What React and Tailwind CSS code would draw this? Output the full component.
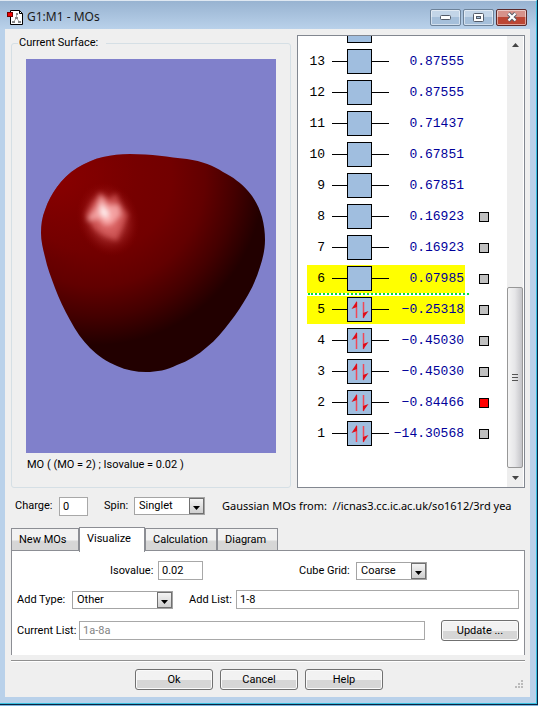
import { useState } from "react";

const orbitals = [
  { id: 13, energy: "0.87555" },
  { id: 12, energy: "0.87555" },
  { id: 11, energy: "0.71437" },
  { id: 10, energy: "0.67851" },
  { id: 9, energy: "0.67851" },
  { id: 8, energy: "0.16923", surface: true },
  { id: 7, energy: "0.16923", surface: true },
  { id: 6, energy: "0.07985", surface: true, selected: true },
  { id: 5, energy: "−0.25318", surface: true, occupied: true, selected: true },
  { id: 4, energy: "−0.45030", surface: true, occupied: true },
  { id: 3, energy: "−0.45030", surface: true, occupied: true },
  { id: 2, energy: "−0.84466", surface: true, occupied: true },
  { id: 1, energy: "−14.30568", surface: true, occupied: true },
];

const tabs = [
  { name: "New MOs", width: "w-[68px]" },
  { name: "Visualize", width: "w-[66px]" },
  { name: "Calculation", width: "w-[72px]" },
  { name: "Diagram", width: "w-[61px]" },
];

function AppIcon() {
  return (
    <svg width="16" height="17" viewBox="0 0 16 17" aria-hidden="true">
      <path d="M3.5 1.5h9l3 3v11h-12z" fill="#fff" stroke="#000" />
      <path d="M12.5 1.5v3h3" fill="none" stroke="#000" />
      <path d="M9.5 5v5M9.500 9l-3 4M9.500 9l3 4" stroke="#aaa" fill="none" />
      <path d="M9 4h2v2H9zM8 8h3v2H8zM5 12h3v2H5zM11 12h3v2h-3z" fill="#888" />
      <rect x="0.5" y="3.500" width="5" height="4" fill="#f00000" stroke="#700" />
    </svg>
  );
}

function TitleBar() {
  const base =
    "flex h-[17px] w-[31px] items-center justify-center rounded-[2px] border shadow-[inset_0_0_0_1px_rgba(255,255,255,0.5)]";
  return (
    <header className="flex h-7 items-center justify-between bg-linear-to-b from-[#98b3d1] to-[#b9d1ea] pl-[7px] pr-[9px] pt-1">
      <div className="flex items-center gap-1">
        <AppIcon />
        <h1 className="font-['Noto_Sans',sans-serif] text-[12px] leading-4 text-[#1a1a1a]">G1:M1 - MOs</h1>
      </div>
      <div className="flex gap-[2px]">
        <button aria-label="Minimize" className={`${base} border-[#6d8299] bg-linear-to-b from-[#c3d5e8] from-50% to-[#a5bfda] to-50%`}>
          <svg width="11" height="5" viewBox="0 0 11 5">
            <rect x="0.5" y="0.5" width="10" height="4" rx="1" fill="#fff" stroke="#535b68" />
          </svg>
        </button>
        <button aria-label="Maximize" className={`${base} border-[#6d8299] bg-linear-to-b from-[#c3d5e8] from-50% to-[#a5bfda] to-50%`}>
          <svg width="11" height="9" viewBox="0 0 11 9">
            <rect x="0.5" y="0.5" width="10" height="8" rx="1" fill="#fff" stroke="#535b68" />
            <rect x="3.5" y="3.5" width="4" height="2" fill="#a5bfda" stroke="#535b68" />
          </svg>
        </button>
        <button aria-label="Close" className={`${base} border-[#5c2a2a] bg-linear-to-b from-[#d6928a] from-50% to-[#bc4634] to-50%`}>
          <svg width="12" height="10" viewBox="0 0 12 10">
            <path d="M2.5 1.5l7 7M9.5 1.5l-7 7" stroke="#535b68" strokeWidth="4" />
            <path d="M2.5 1.5l7 7M9.5 1.5l-7 7" stroke="#fff" strokeWidth="2.2" />
          </svg>
        </button>
      </div>
    </header>
  );
}

// Rendered isosurface of the selected orbital
function SurfaceView() {
  return (
    <svg className="block h-[394px] w-full bg-[#8080cb]" viewBox="0 0 250 394" role="img" aria-label="Molecular orbital surface">
      <defs>
        <radialGradient id="shade" gradientUnits="userSpaceOnUse" cx="70" cy="118" r="168">
          <stop offset="0" stopColor="#7c0000" />
          <stop offset="0.45" stopColor="#720000" />
          <stop offset="0.65" stopColor="#620000" />
          <stop offset="0.83" stopColor="#440000" />
          <stop offset="1" stopColor="#220000" />
        </radialGradient>
        <radialGradient id="rim" gradientUnits="userSpaceOnUse" cx="25" cy="115" r="85">
          <stop offset="0" stopColor="#960000" stopOpacity="0.7" />
          <stop offset="1" stopColor="#800000" stopOpacity="0" />
        </radialGradient>
        <radialGradient id="glow">
          <stop offset="0" stopColor="#ff9a9a" stopOpacity="0.9" />
          <stop offset="0.5" stopColor="#d85858" stopOpacity="0.5" />
          <stop offset="1" stopColor="#900000" stopOpacity="0" />
        </radialGradient>
        <filter id="soft" x="-30%" y="-30%" width="160%" height="160%">
          <feGaussianBlur stdDeviation="2.5" />
        </filter>
        <path
          id="body"
          d="M104 95C126 95 142 98 161 100C176 102 188 107 197 113C207 118 215 124 222 132C229 140 233 148 236 158C238 166 239 173 239 181C239 190 237 199 234 208C231 218 227 227 222 236C216 246 211 254 204 263C197 272 190 281 181 288C172 296 162 302 151 306C141 311 131 313 120 313C110 313 100 311 91 307C81 303 71 296 64 289C56 281 50 272 44 261C38 250 33 240 29 229C25 218 21 208 19 198C17 190 15 182 15 174C15 166 16 158 19 151C22 142 26 135 31 128C36 121 43 114 51 109C59 104 68 100 77 98C86 96 94 95 104 95Z"
        />
      </defs>
      <use href="#body" fill="url(#shade)" />
      <use href="#body" fill="url(#rim)" />
      <ellipse cx="82" cy="160" rx="31" ry="38" fill="url(#glow)" transform="rotate(-20 82 160)" />
      <g filter="url(#soft)">
        <path d="M74 133L83 141L90 134L95 146L102 156L96 168L91 182L78 176L68 169L59 156L66 144Z" fill="#e87070" opacity="0.55" />
        <path d="M75 136L82 146L93 146L95 156L86 164L79 166L73 160L60 162L70 148Z" fill="#ffbcbc" opacity="0.7" />
        <path d="M75 144L83 154L81 160L74 155Z" fill="#fff" opacity="0.8" />
      </g>
    </svg>
  );
}

function OrbitalBox({ occupied }) {
  return (
    <span className="flex h-[25px] w-[25px] shrink-0 items-center justify-center border border-black bg-[#a0bedf]">
      {occupied && (
        <svg width="23" height="23" viewBox="0 0 23 23" aria-hidden="true">
          <path d="M8.5 4v16M15.5 4v16" stroke="#f04858" strokeWidth="1.5" />
          <path d="M9 3L3.500 11L9 9zM15 20.500L20.500 13L15 15z" fill="#e00c18" />
        </svg>
      )}
    </span>
  );
}

function OrbitalRow({ orbital, checked, onCheck }) {
  return (
    <li className="flex h-[31px] shrink-0 items-center gap-[14px] pl-[9px] font-['Liberation_Mono',monospace] text-[13px]">
      <div className={`relative flex h-7 w-[158px] items-center ${orbital.selected ? "bg-[#ffff00]" : ""}`}>
        <span className="w-[18px] text-right text-black">{orbital.id}</span>
        <span className="ml-[7px] h-px w-[15px] bg-black" />
        <OrbitalBox occupied={orbital.occupied} />
        <span className="h-px w-[17px] bg-black" />
        {/* the longest value reaches up to the level line */}
        <span className="flex w-[75px] justify-end text-[#00009a]">{orbital.energy}</span>
        {orbital.id === 6 && (
          <span className="absolute -bottom-[2px] left-px w-[161px] border-b-2 border-dotted border-[#00e03c]" />
        )}
      </div>
      {orbital.surface && (
        <input
          type="checkbox"
          aria-label={`Show orbital ${orbital.id}`}
          checked={checked}
          onChange={() => onCheck(orbital.id)}
          className="h-[10px] w-[10px] appearance-none border border-black bg-[#c0c0c0] checked:bg-[#ff0000]"
        />
      )}
    </li>
  );
}

function ScrollBar() {
  return (
    <div className="flex w-4 flex-col bg-[#eeeeee]">
      <button aria-label="Scroll up" className="flex h-[17px] items-center justify-center">
        <svg width="7" height="4" viewBox="0 0 7 4"><path d="M3.500 0L7 4H0z" fill="#444" /></svg>
      </button>
      <div className="grow" />
      <div className="flex h-[181px] items-center justify-center rounded-[2px] border border-[#979797] bg-linear-to-r from-[#f4f4f4] via-[#e6e6e8] to-[#c4c4c8]">
        <svg width="7" height="8" viewBox="0 0 7 8"><path d="M0 .5h6M0 3.500h6M0 6.500h6" stroke="#555" /></svg>
      </div>
      <button aria-label="Scroll down" className="flex h-[19px] items-center justify-center">
        <svg width="7" height="4" viewBox="0 0 7 4"><path d="M3.500 4L7 0H0z" fill="#444" /></svg>
      </button>
    </div>
  );
}

function Select({ id, options, className }) {
  return (
    <span className={`relative flex h-[18px] shrink-0 ${className}`}>
      <select id={id} className="w-full appearance-none border border-[#a4a4a4] bg-white pl-1 leading-4 outline-none">
        {options.map((option) => (
          <option key={option}>{option}</option>
        ))}
      </select>
      <span className="pointer-events-none absolute inset-y-px right-px flex w-[15px] items-center justify-center border border-[#707070] bg-linear-to-b from-[#f4f4f4] to-[#cfcfcf] pt-1">
        <svg width="7" height="4" viewBox="0 0 7 4"><path d="M0 0h7L3.500 4z" fill="#000" /></svg>
      </span>
    </span>
  );
}

function PushButton({ children }) {
  return (
    <button className="h-[21px] w-[78px] shrink-0 rounded-[3px] border border-[#707070] bg-linear-to-b from-[#f2f2f2] from-50% to-[#d6d6d6] to-55% leading-4 shadow-[inset_0_0_0_1px_#fafafa]">
      {children}
    </button>
  );
}

export default function App() {
  const [shown, setShown] = useState([2]);
  const [tab, setTab] = useState("Visualize");

  const toggleShown = (id) => {
    setShown(shown.includes(id) ? shown.filter((other) => other !== id) : [...shown, id]);
  };

  const inputClass = "h-[19px] border border-[#a8a8a8] bg-white pl-[3px] outline-none";

  return (
    <div className="border-b border-[#7db4dc] bg-[#0c2340] font-['Roboto',sans-serif] text-[11px] leading-4 text-black">
      <div className="mr-px border-r border-b border-t border-r-[#38c0e0] border-b-[#38c0e0] border-t-[#dfe8f2] bg-[#b9d1ea]">
        <TitleBar />
        <main className="mb-[6px] ml-[5px] mr-[6px] bg-[#efefef] pb-[7px] pl-[6px] pr-[5px] pt-[6px]">
          <div className="flex gap-[6px]">
            <fieldset className="min-w-0 grow rounded-[3px] border border-[#d5dfe5] px-[14px] pb-[11px] pt-2">
              <legend className="-ml-2 pl-px pr-2">Current Surface:</legend>
              <SurfaceView />
              <p className="mt-1 pl-px">MO ( (MO = 2) ; Isovalue = 0.02 )</p>
            </fieldset>

            <div className="flex h-[453px] w-[228px] shrink-0 overflow-hidden border border-[#828790] bg-white pr-px">
              <ol className="flex grow flex-col justify-end overflow-hidden pb-[38px]">
                {/* box of the next level, scrolled half out of view */}
                <li className="flex h-[31px] shrink-0 items-center pl-[49px]">
                  <OrbitalBox />
                </li>
                {orbitals.map((orbital) => (
                  <OrbitalRow key={orbital.id} orbital={orbital} checked={shown.includes(orbital.id)} onCheck={toggleShown} />
                ))}
              </ol>
              <ScrollBar />
            </div>
          </div>

          <div className="mt-2 flex h-5 items-center pl-1">
            <label htmlFor="charge" className="w-11">Charge:</label>
            <input id="charge" type="text" defaultValue="0" className={`${inputClass} w-[29px]`} />
            <label htmlFor="spin" className="ml-4 w-[30px]">Spin:</label>
            <Select id="spin" options={["Singlet", "Triplet"]} className="w-[71px]" />
            <p className="ml-[17px] overflow-hidden whitespace-pre font-['Noto_Sans',sans-serif]">
              Gaussian MOs from:  //icnas3.cc.ic.ac.uk/so1612/3rd yea
            </p>
          </div>

          <div role="tablist" className="mt-[10px] flex h-6 items-end">
            {tabs.map(({ name, width }) => (
              <button
                key={name}
                role="tab"
                aria-selected={tab === name}
                onClick={() => setTab(name)}
                className={`${width} border border-b-0 border-[#8c8e94] px-[7px] text-left ${
                  tab === name
                    ? "relative z-10 -mb-[2px] h-[25px] bg-white pb-[2px]"
                    : "h-[22px] bg-linear-to-b from-[#f2f2f2] from-50% to-[#d6d6d6] to-60%"
                }`}
              >
                {name}
              </button>
            ))}
          </div>

          <section role="tabpanel" className="border border-b-0 border-[#8c8e94] bg-white px-[5px] pb-[14px] pt-[10px]">
            <div className="flex items-center">
              <label htmlFor="isovalue" className="ml-[93px] w-[48px]">Isovalue:</label>
              <input id="isovalue" type="text" defaultValue="0.02" className={`${inputClass} w-[45px]`} />
              <label htmlFor="grid" className="ml-auto w-[57px]">Cube Grid:</label>
              <Select id="grid" options={["Coarse", "Medium", "Fine"]} className="mr-[92px] w-[71px]" />
            </div>
            <div className="mt-[10px] flex items-center">
              <label htmlFor="type" className="w-[55px]">Add Type:</label>
              <Select id="type" options={["Other", "Occupied", "Virtual"]} className="w-[101px]" />
              <label htmlFor="add" className="ml-4 w-[47px]">Add List:</label>
              <input id="add" type="text" defaultValue="1-8" className={`${inputClass} min-w-0 grow`} />
            </div>
            <div className="mt-[11px] flex items-center">
              <label htmlFor="current" className="w-[62px] shrink-0">Current List:</label>
              <input id="current" type="text" readOnly defaultValue="1a-8a" className={`${inputClass} mr-4 min-w-0 grow text-[#838383]`} />
              <PushButton>Update ...</PushButton>
            </div>
          </section>

          <footer className="mt-[5px] flex items-end border-t border-[#909090] pt-2 shadow-[inset_0_1px_0_#fff]">
            <div className="flex grow justify-center gap-[7px] pr-2">
              <PushButton>Ok</PushButton>
              <PushButton>Cancel</PushButton>
              <PushButton>Help</PushButton>
            </div>
            <svg width="10" height="10" viewBox="0 0 10 10" aria-hidden="true">
              <path d="M6 0h2v2H6zM3 3h2v2H3zM6 3h2v2H6zM0 6h2v2H0zM3 6h2v2H3zM6 6h2v2H6z" fill="#bbb" />
            </svg>
          </footer>
        </main>
      </div>
      <div className="h-px" />
    </div>
  );
}
